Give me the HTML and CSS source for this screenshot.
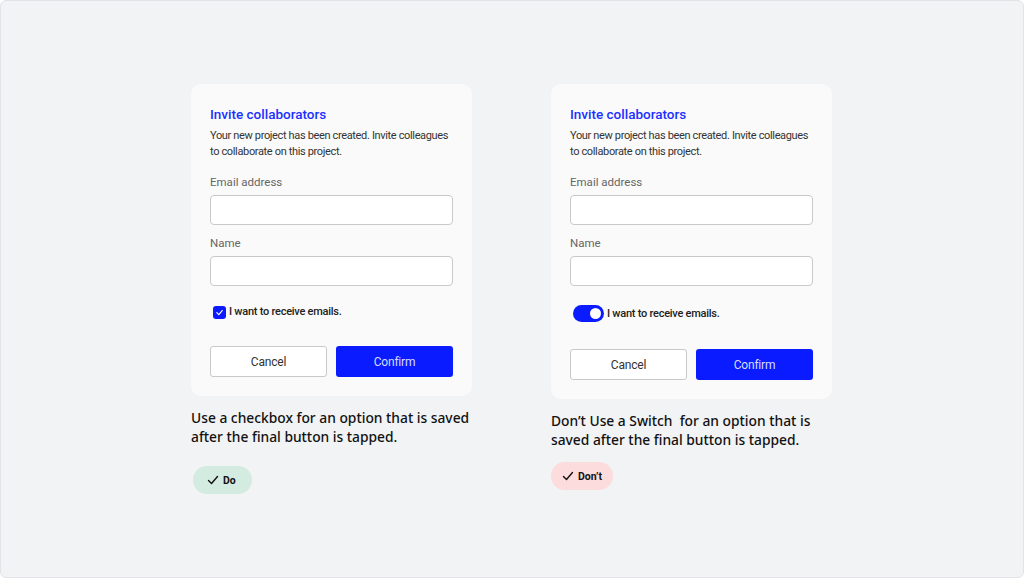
FILE: index.html
```html
<!DOCTYPE html>
<html lang="en">
<head>
    <meta charset="UTF-8">
    <meta name="viewport" content="width=device-width, initial-scale=1.0">
    <title>Checkbox vs Switch</title>
<link rel="stylesheet" href="styles.css">
</head>
<body>
    <div class="frame">
        <section class="column">
            <article class="card">
                <h2 class="title">Invite collaborators</h2>
                <p class="desc">Your new project has been created. Invite colleagues<br>to collaborate on this project.</p>
                <label class="label">Email address</label>
                <div class="input"></div>
                <label class="label">Name</label>
                <div class="input"></div>
                <div class="option">
                    <span class="checkbox">
                        <svg width="9" height="9" viewBox="0 0 10 10"><path d="M2 5.2 L4.2 7.3 L8 2.8" fill="none" stroke="#fff" stroke-width="1.3" stroke-linecap="round" stroke-linejoin="round"/></svg>
                    </span>
                    <span>I want to receive emails.</span>
                </div>
                <div class="actions">
                    <button class="btn cancel">Cancel</button>
                    <button class="btn confirm">Confirm</button>
                </div>
            </article>
            <p class="caption">Use a checkbox for an option that is saved<br>after the final button is tapped.</p>
            <span class="badge do">
                <svg width="12" height="12" viewBox="0 0 12 12"><path d="M1.5 6.5 L4.5 9.5 L10.5 2.5" fill="none" stroke="#111" stroke-width="1.4" stroke-linecap="round" stroke-linejoin="round"/></svg>
                Do
            </span>
        </section>

        <section class="column">
            <article class="card">
                <h2 class="title">Invite collaborators</h2>
                <p class="desc">Your new project has been created. Invite colleagues<br>to collaborate on this project.</p>
                <label class="label">Email address</label>
                <div class="input"></div>
                <label class="label">Name</label>
                <div class="input"></div>
                <div class="option">
                    <span class="switch"><span class="knob"></span></span>
                    <span>I want to receive emails.</span>
                </div>
                <div class="actions">
                    <button class="btn cancel">Cancel</button>
                    <button class="btn confirm">Confirm</button>
                </div>
            </article>
            <p class="caption">Don’t Use a Switch&nbsp; for an option that is<br>saved after the final button is tapped.</p>
            <span class="badge dont">
                <svg width="12" height="12" viewBox="0 0 12 12"><path d="M1.5 6.5 L4.5 9.5 L10.5 2.5" fill="none" stroke="#111" stroke-width="1.4" stroke-linecap="round" stroke-linejoin="round"/></svg>
                Don’t
            </span>
        </section>
    </div>
</body>
</html>
```

FILE: styles.css
```css
*{
    padding: 0;
    margin: 0;
    box-sizing: border-box;
}
body{
    width: 1024px;
    height: 578px;
    font-family: Roboto, "Noto Sans", sans-serif;
    background: #ffffff;
}
.frame{
    height: 578px;
    width: 1024px;
    background: #f2f3f5;
    border: 1px solid #e1e3e7;
    border-radius: 6px;
    display: flex;
    gap: 79px;
    padding: 83px 0 0 190px;
}
.column{
    width: 281px;
    display: flex;
    flex-direction: column;
    align-items: flex-start;
}
.card{
    width: 281px;
    background: #fafafa;
    border-radius: 10px;
    padding: 20px 19px 19px;
    display: flex;
    flex-direction: column;
}
.title{
    color: #1b30ff;
    font-size: 13.5px;
    font-weight: 500;
    line-height: 20px;
}
.desc{
    margin-top: 4px;
    color: #333;
    font-size: 11px;
    letter-spacing: -0.35px;
    line-height: 16px;
    white-space: nowrap;
}
.label{
    margin-top: 14px;
    color: #666;
    font-size: 11.5px;
    line-height: 16px;
}
.input + .label{
    margin-top: 10px;
}
.input{
    margin-top: 5px;
    height: 30px;
    width: 243px;
    background: #fff;
    border: 1px solid #c9c9c9;
    border-radius: 4px;
}
.option{
    margin-top: 19px;
    display: flex;
    align-items: center;
    gap: 3px;
    padding-left: 3px;
    color: #222;
    font-size: 11px;
    font-weight: 500;
    letter-spacing: -0.25px;
    line-height: 14px;
}
.checkbox{
    width: 13px;
    height: 13px;
    border-radius: 3px;
    background: #0a1cff;
    display: flex;
    align-items: center;
    justify-content: center;
}
.switch{
    width: 31px;
    height: 17px;
    border-radius: 9px;
    background: #0a1cff;
    display: flex;
    align-items: center;
    justify-content: flex-end;
    padding-right: 3px;
}
.knob{
    width: 11px;
    height: 11px;
    border-radius: 50%;
    background: #fff;
}
.actions{
    margin-top: 27px;
    display: flex;
    gap: 9px;
}
.btn{
    width: 117px;
    height: 31px;
    border-radius: 3px;
    font-family: inherit;
    font-size: 12px;
    letter-spacing: -0.2px;
}
.cancel{
    background: #fff;
    border: 1px solid #c9c9c9;
    color: #333;
}
.confirm{
    background: #0a1cff;
    border: none;
    color: #d6dcff;
}
.caption{
    margin-top: 12px;
    color: #111;
    font-family: "Noto Sans", sans-serif;
    font-size: 13.8px;
    font-weight: 500;
    line-height: 19px;
    white-space: nowrap;
}
.badge{
    margin-top: 20px;
    margin-left: 2px;
    height: 28px;
    border-radius: 14px;
    padding: 0 14px;
    display: flex;
    align-items: center;
    gap: 4px;
    color: #111;
    font-size: 10.5px;
    font-weight: 700;
}
.do{
    width: 59px;
    background: #d3ebe0;
}
.dont{
    margin-left: 0;
    margin-top: 13px;
    width: 62px;
    background: #fcdcdc;
    padding: 0 11px;
}
```
